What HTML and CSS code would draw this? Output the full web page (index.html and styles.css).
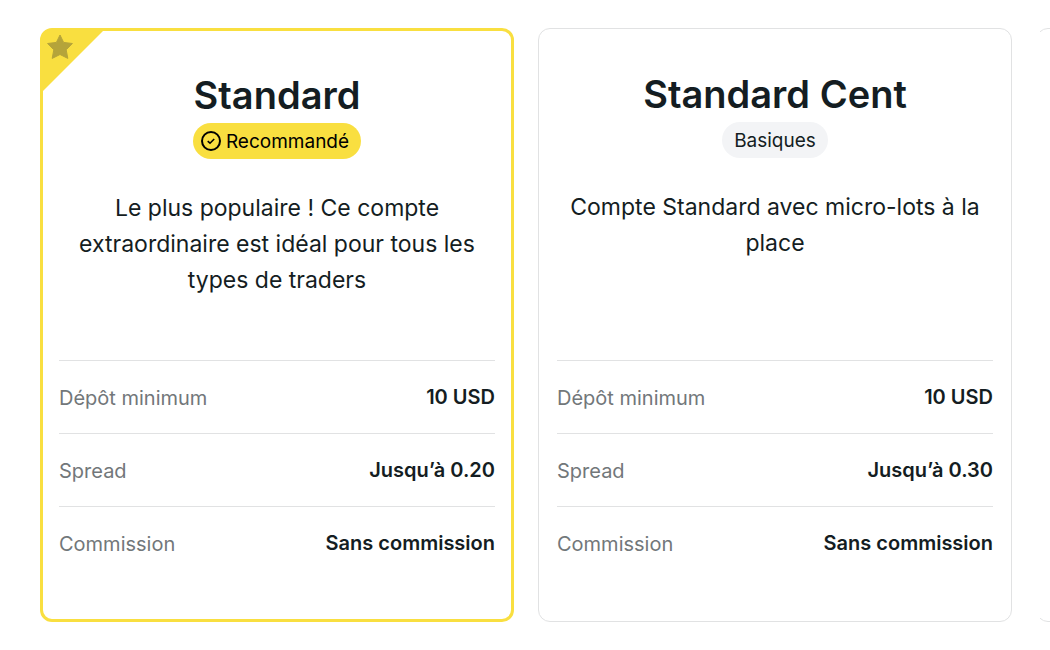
FILE: index.html
```html
<!DOCTYPE html>
<html lang="fr">
<head>
    <meta charset="UTF-8" />
    <meta name="viewport" content="width=device-width, initial-scale=1.0" />
    <title>Comptes</title>
    <link rel="stylesheet" href="styles.css">
</head>
<body>
    <main class="carousel">
        <article class="card recommended">
            <div class="ribbon">
                <svg class="star" viewBox="0 0 26 25" aria-hidden="true">
                    <path d="M13 1 L16.6 8.4 L25.4 9.5 L19.2 15.8 L20.8 24.4 L13 20.5 L5.2 24.4 L6.8 15.8 L0.6 9.5 L9.4 8.4 Z" />
                </svg>
            </div>
            <h2>Standard</h2>
            <div class="badge badge-yellow">
                <svg class="check" viewBox="0 0 20 20" aria-hidden="true">
                    <circle cx="10" cy="10" r="9" />
                    <path d="M6.7 10.2 L9 12.2 L13.2 8" />
                </svg>
                <span>Recommandé</span>
            </div>
            <p class="description">Le plus populaire ! Ce compte extraordinaire est idéal pour tous les types de traders</p>
            <table class="details">
                <tr>
                    <th scope="row">Dépôt minimum</th>
                    <td>10 USD</td>
                </tr>
                <tr>
                    <th scope="row">Spread</th>
                    <td>Jusqu’à 0.20</td>
                </tr>
                <tr>
                    <th scope="row">Commission</th>
                    <td>Sans commission</td>
                </tr>
            </table>
        </article>

        <article class="card">
            <h2>Standard Cent</h2>
            <div class="badge">Basiques</div>
            <p class="description">Compte Standard avec micro-lots à la place</p>
            <table class="details">
                <tr>
                    <th scope="row">Dépôt minimum</th>
                    <td>10 USD</td>
                </tr>
                <tr>
                    <th scope="row">Spread</th>
                    <td>Jusqu’à 0.30</td>
                </tr>
                <tr>
                    <th scope="row">Commission</th>
                    <td>Sans commission</td>
                </tr>
            </table>
        </article>

        <article class="card next"></article>
    </main>
</body>
</html>
```
FILE: styles.css
```css
* {
    box-sizing: border-box;
}

body {
    margin: 0;
    background-color: #fff;
    color: #141d22;
    font-family: Inter, "Liberation Sans", sans-serif;
}

.carousel {
    display: flex;
    gap: 24px;
    padding: 28px 0 28px 40px;
    overflow: hidden;
}

.card {
    position: relative;
    display: flex;
    flex-direction: column;
    align-items: center;
    flex: 0 0 calc(50% - 31px);
    padding: 41px 18px 42px;
    border: 1px solid #e1e2e3;
    border-radius: 12px;
}

.card.recommended {
    padding: 40px 16px;
    border: 3px solid #f9df40;
}

/* carte suivante, coupée par le bord du carrousel */
.card.next {
    clip-path: inset(0 0 0 4px);
}

.ribbon {
    position: absolute;
    top: -1px;
    left: -1px;
    width: 62px;
    height: 62px;
    padding: 4px 5px;
    border-top-left-radius: 10px;
    background-color: #f9df40;
    clip-path: polygon(0 0, 100% 0, 0 100%);
}

.star {
    display: block;
    width: 26px;
    height: 25px;
    fill: #b5a43a;
    stroke: #b5a43a;
    stroke-width: 1;
    stroke-linejoin: round;
}

h2 {
    margin: 0 0 4px;
    font-size: 38px;
    font-weight: 600;
    line-height: 48px;
}

.badge {
    display: flex;
    align-items: center;
    gap: 5px;
    height: 36px;
    padding: 0 12px;
    border-radius: 18px;
    background-color: #f3f4f6;
    font-size: 19px;
}

.badge-yellow {
    padding-left: 8px;
    background-color: #f9df40;
    color: #000;
}

.check {
    width: 20px;
    height: 20px;
    fill: none;
    stroke: #000;
    stroke-width: 2;
}

.check path {
    stroke-width: 1.6;
}

.description {
    flex: 1;
    min-height: 144px;
    margin: 31px 0 26px;
    font-size: 23px;
    line-height: 36px;
    text-align: center;
}

.details {
    width: 100%;
    border-collapse: separate;
    border-spacing: 0;
    font-size: 20px;
    line-height: 24px;
}

.details th,
.details td {
    height: 73px;
    padding: 0;
    border-top: 1px solid #e1e2e3;
}

.details th {
    padding-top: 2px;
    color: #72777a;
    font-weight: 400;
    text-align: left;
}

.details td {
    font-weight: 600;
    text-align: right;
}
```
